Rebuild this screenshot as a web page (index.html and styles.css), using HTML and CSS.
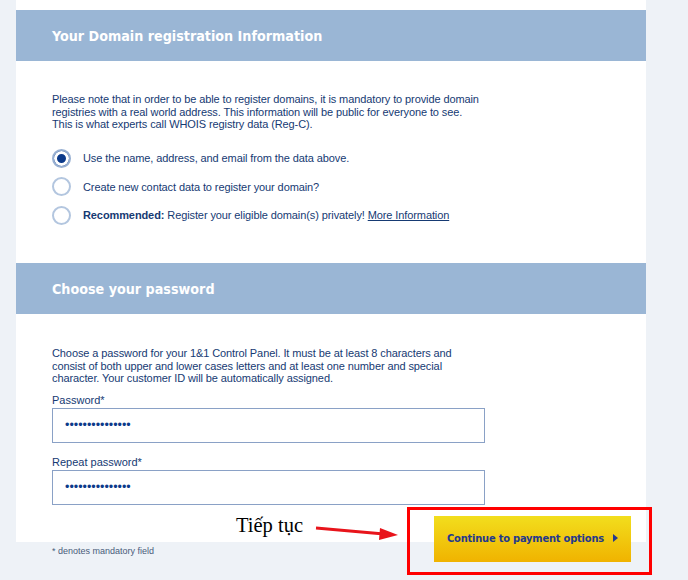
FILE: index.html
```html
<!DOCTYPE html>
<html lang="en">
<head>
    <meta charset="UTF-8">
    <meta name="viewport" content="width=device-width, initial-scale=1.0">
    <title>Domain registration</title>
    <link rel="stylesheet" href="styles.css">
</head>
<body>

    <div class="page">
        <div class="panel">

            <!-- Domain registration info -->
            <div class="section-head">Your Domain registration Information</div>
            <div class="section-body domain-body">
                <p class="note">Please note that in order to be able to register domains, it is mandatory to provide domain registries with a real world address. This information will be public for everyone to see. This is what experts call WHOIS registry data (Reg-C).</p>

                <div class="options">
                    <label class="option"><span class="radio checked"></span> Use the name, address, and email from the data above.</label>
                    <label class="option"><span class="radio"></span> Create new contact data to register your domain?</label>
                    <label class="option"><span class="radio"></span> <span><strong>Recommended:</strong> Register your eligible domain(s) privately! <a href="#">More Information</a></span></label>
                </div>
            </div>

            <!-- Password -->
            <div class="section-head">Choose your password</div>
            <div class="section-body password-body">
                <p class="note">Choose a password for your 1&amp;1 Control Panel. It must be at least 8 characters and consist of both upper and lower cases letters and at least one number and special character. Your customer ID will be automatically assigned.</p>

                <label class="field-label" for="pw">Password*</label>
                <div class="field" id="pw">&bull;&bull;&bull;&bull;&bull;&bull;&bull;&bull;&bull;&bull;&bull;&bull;&bull;&bull;&bull;</div>

                <label class="field-label" for="pw2">Repeat password*</label>
                <div class="field" id="pw2">&bull;&bull;&bull;&bull;&bull;&bull;&bull;&bull;&bull;&bull;&bull;&bull;&bull;&bull;&bull;</div>
            </div>
        </div>

        <div class="footer">
            <div class="mandatory">* denotes mandatory field</div>
            <button class="continue">Continue to payment options <span class="arrow"></span></button>

            <!-- annotation -->
            <div class="note-label">Tiếp tục</div>
            <svg class="note-arrow" width="90" height="16" viewBox="0 0 90 16">
                <line x1="2" y1="4" x2="70" y2="10" stroke="#e8141b" stroke-width="3"/>
                <polygon points="84,11 66,4 65,16" fill="#e8141b"/>
            </svg>
            <div class="note-box"></div>
        </div>
    </div>

</body>
</html>
```

FILE: styles.css
```css
body {
    margin: 0;
    padding: 0;
    background-color: #eef2f7;
    font-family: 'Liberation Sans', Arial, sans-serif;
    color: #163a73;
}

.page {
    width: 688px;
    height: 580px;
    overflow: hidden;
}

.panel {
    width: 630px;
    margin-left: 16px;
    padding-top: 10px;
    background-color: #ffffff;
}

.section-head {
    height: 51px;
    display: flex;
    align-items: center;
    padding-left: 36px;
    background-color: #9ab6d5;
    color: #ffffff;
    font-family: 'DejaVu Sans Condensed', 'Liberation Sans Narrow', 'DejaVu Sans', sans-serif;
    font-stretch: condensed;
    font-weight: bold;
    font-size: 14.2px;
}

.section-body {
    padding: 32px 36px 0;
}

.domain-body {
    height: 170px;
}

.password-body {
    padding-top: 33px;
    height: 195px;
}

.note {
    margin: 0;
    width: 430px;
    font-size: 11px;
    line-height: 12.5px;
    letter-spacing: -0.1px;
}

.options {
    margin-top: 18px;
    display: flex;
    flex-direction: column;
    gap: 9.5px;
}

.option {
    display: flex;
    align-items: center;
    gap: 12px;
    height: 19px;
    font-size: 11px;
    letter-spacing: -0.1px;
}

.option a {
    color: #163a73;
}

.radio {
    width: 15px;
    height: 15px;
    border: 2px solid #b3c6df;
    border-radius: 50%;
    flex-shrink: 0;
}

.radio.checked {
    border-color: #98b0d2;
    background-color: #0c3a8a;
    box-shadow: inset 0 0 0 3px #ffffff;
}

.field-label {
    display: block;
    margin-top: 13px;
    font-size: 11px;
    line-height: 13px;
}

.note + .field-label {
    margin-top: 9px;
}

.field-label + .field {
    margin-top: 1px;
}

.field {
    width: 419px;
    height: 33px;
    padding-left: 12px;
    border: 1px solid #8aa1c6;
    display: flex;
    align-items: center;
    font-size: 12.5px;
    color: #0c3a8a;
}

.footer {
    position: relative;
    margin-top: -26px;
    display: flex;
    justify-content: space-between;
    width: 630px;
    margin-left: 16px;
}

.mandatory {
    padding-top: 30px;
    padding-left: 36px;
    font-size: 9px;
    color: #4a5c7a;
}

.continue {
    width: 197px;
    height: 46px;
    margin-right: 15px;
    border: none;
    background: linear-gradient(#f2de1d, #f0b300);
    color: #24398c;
    font-family: 'DejaVu Sans Condensed', 'Liberation Sans Narrow', 'DejaVu Sans', sans-serif;
    font-stretch: condensed;
    font-weight: bold;
    font-size: 11px;
    letter-spacing: -0.2px;
    display: flex;
    align-items: center;
    justify-content: center;
    gap: 9px;
    padding: 0 0 2px;
}

.arrow {
    width: 0;
    height: 0;
    border-top: 4.5px solid transparent;
    border-bottom: 4.5px solid transparent;
    border-left: 5px solid #24398c;
}

/* Annotation over the button */
.note-label {
    position: absolute;
    left: 220px;
    top: -2px;
    font-family: 'Liberation Serif', 'Times New Roman', serif;
    font-size: 20.5px;
    color: #000000;
}

.note-arrow {
    position: absolute;
    left: 298px;
    top: 8px;
}

.note-box {
    position: absolute;
    left: 391px;
    top: -9px;
    width: 239px;
    height: 62px;
    border: 3px solid #ff0000;
}
```
